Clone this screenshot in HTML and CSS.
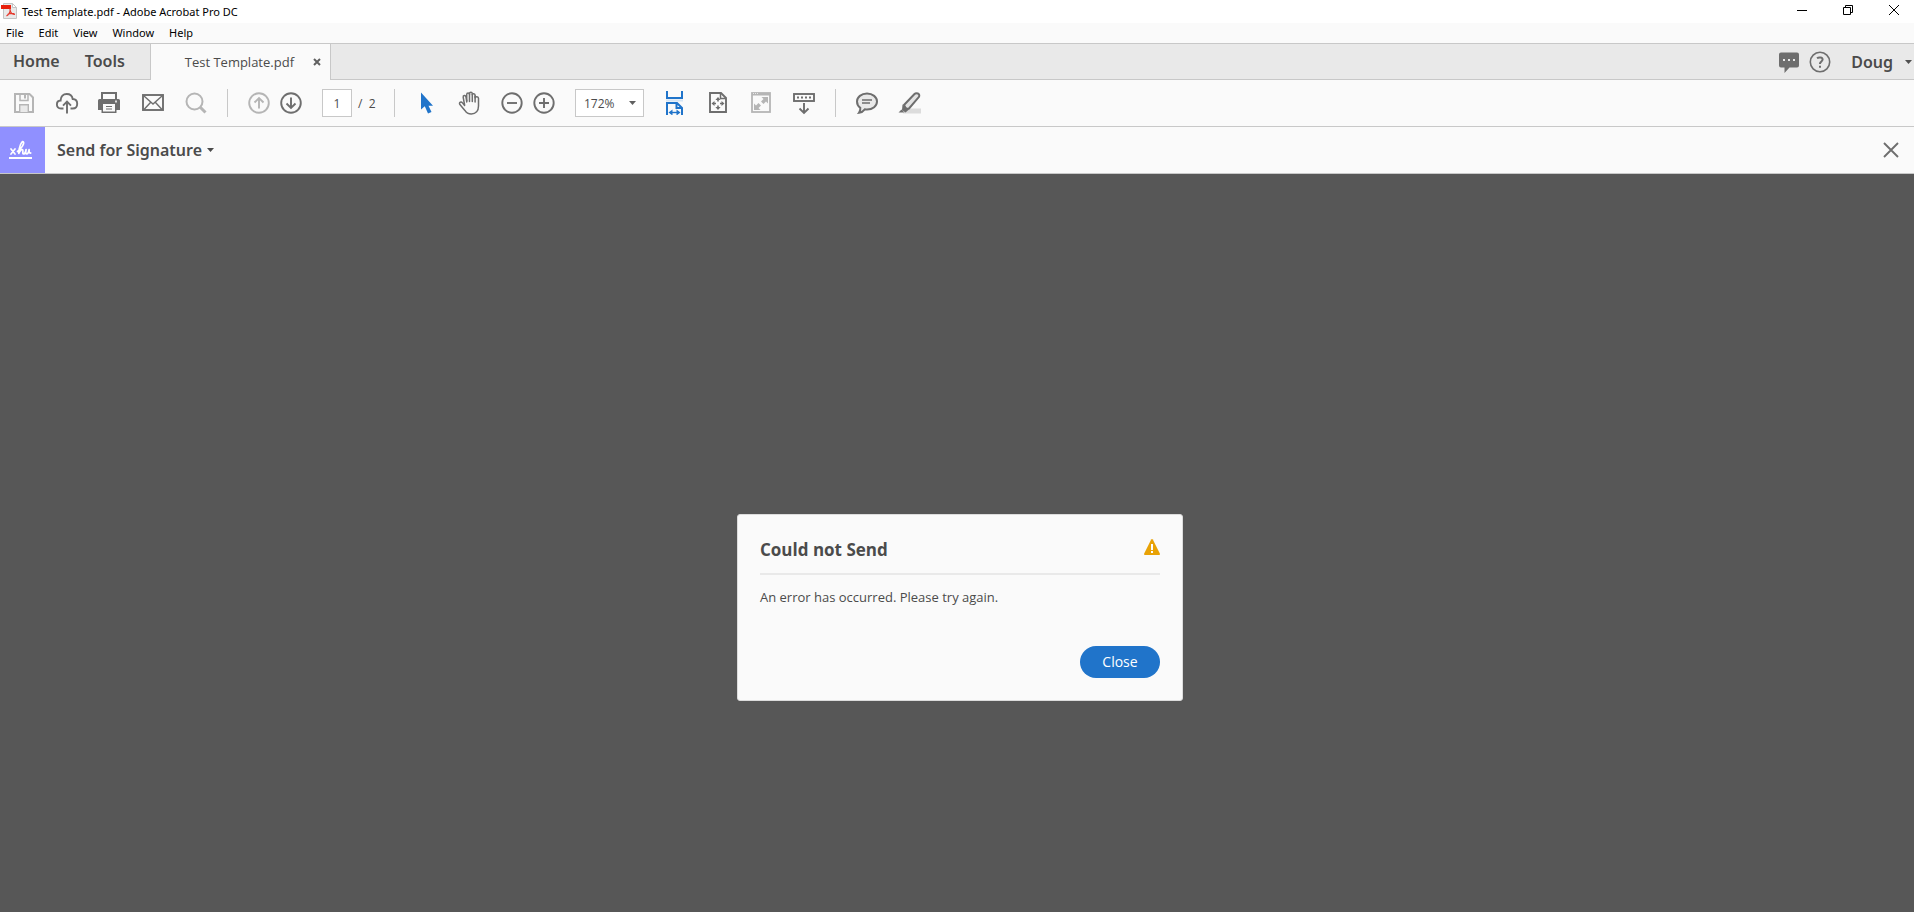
FILE: index.html
```html
<!DOCTYPE html>
<html lang="en">
<head>
<meta charset="utf-8">
<title>Test Template.pdf - Adobe Acrobat Pro DC</title>
<link rel="stylesheet" href="styles.css">
</head>
<body>
<div class="app">
  <header class="titlebar">
    <svg class="pdf-icon" width="16" height="16" viewBox="0 0 16 16" aria-hidden="true">
      <path d="M2.500 .5h9l4 4v11h-13z" fill="#e9e9e9" stroke="#c4c4c4"/>
      <path d="M11.500 .5v4h4z" fill="#fff" stroke="#c4c4c4"/>
      <path d="M0 2h10v4H0z" fill="#e8200c"/>
      <path d="M9 5.500c.5 3-1 6-3.500 7.500M9 6.500c.5 3 2 5 5 5M6.500 11.500c2-1.200 4.500-1.500 7-.8" fill="none" stroke="#e5392c" stroke-width="1.200"/>
    </svg>
    <h1 class="window-title">Test Template.pdf - Adobe Acrobat Pro DC</h1>
    <div class="window-controls">
      <button class="window-button" aria-label="Minimize"><svg width="10" height="10" viewBox="0 0 10 10"><path d="M0 5.500h10" stroke="#000"/></svg></button>
      <button class="window-button" aria-label="Restore"><svg width="10" height="10" viewBox="0 0 10 10"><path d="M.5 2.500h7v7h-7zM2.500 2.500v-2h7v7h-2" fill="none" stroke="#000"/></svg></button>
      <button class="window-button" aria-label="Close window"><svg width="10" height="10" viewBox="0 0 10 10"><path d="M0 0l10 10M10 0L0 10" stroke="#000"/></svg></button>
    </div>
  </header>

  <nav class="menubar" aria-label="Menu">
    <button class="menu-item">File</button>
    <button class="menu-item">Edit</button>
    <button class="menu-item">View</button>
    <button class="menu-item">Window</button>
    <button class="menu-item">Help</button>
  </nav>

  <div class="tabbar">
    <div class="main-tabs">
      <button class="main-tab">Home</button>
      <button class="main-tab">Tools</button>
    </div>
    <div class="document-tab">
      <button class="document-name">Test Template.pdf</button>
      <button class="icon-button" aria-label="Close tab"><svg width="8" height="8" viewBox="0 0 8 8"><path d="M1 1l6 6M7 1L1 7" stroke="#606060" stroke-width="2"/></svg></button>
    </div>
    <div class="account">
      <button class="icon-button" aria-label="Notifications"><svg width="22" height="22" viewBox="0 0 22 22"><path d="M3 1.500h16a2 2 0 0 1 2 2v11a2 2 0 0 1-2 2h-7.500L6.500 22v-5.500H3a2 2 0 0 1-2-2v-11a2 2 0 0 1 2-2z" fill="#6e6e6e"/><path d="M5 8h2v2H5zM10 8h2v2h-2zM15 8h2v2h-2z" fill="#e9e9e9"/></svg></button>
      <button class="icon-button" aria-label="Help"><svg width="22" height="22" viewBox="0 0 22 22" fill="none" stroke="#6e6e6e"><circle cx="11" cy="11" r="9.700" stroke-width="1.600"/><path d="M8 7.200c1.800-1.300 5.600-1.100 5.600 1.300 0 1.900-2.700 2-2.700 4.500" stroke-width="2"/><path d="M10 14.700h2v2h-2z" fill="#6e6e6e" stroke="none"/></svg></button>
      <button class="user-button">Doug<svg width="7" height="4" viewBox="0 0 7 4"><path d="M0 0h7L3.500 4z" fill="#505050"/></svg></button>
    </div>
  </div>

  <div class="toolbar" role="toolbar" aria-label="Document tools">
    <button class="icon-button" aria-label="Save"><svg width="24" height="24" viewBox="0 0 24 24" fill="none" stroke="#b5b5b5" stroke-width="2"><path d="M3 3h14.500L21 6.500V21H3z"/><path d="M8 3v6.500h8V3" stroke-width="1.500"/><path d="M13 4v3.500" stroke-width="2"/><path d="M7.700 21v-7.300h8.600V21" fill="#e9e9e9" stroke-width="1.400"/></svg></button>
    <button class="icon-button" aria-label="Upload to cloud"><svg width="24" height="24" viewBox="0 0 24 24" fill="none" stroke="#6e6e6e" stroke-width="1.900"><path d="M8.500 17.500H6C3.300 17.500 1.900 15.700 1.900 13.500c0-2.300 1.500-3.900 3.700-4C5.700 5.500 8.300 3 11.700 3c3.300 0 5.500 2 6 5 2.700.1 4.500 2 4.500 4.700 0 2.800-1.800 4.800-4.500 4.800h-2.200"/><path d="M12 22.500V11M8 14.700l4-4 4 4"/></svg></button>
    <button class="icon-button" aria-label="Print"><svg width="24" height="24" viewBox="1 0 24 24"><path d="M5 9V2h14v7" fill="#fafafa" stroke="#6e6e6e" stroke-width="2"/><path d="M2.500 8h19A1.500 1.500 0 0 1 23 9.500V19h-3.500v3h-15v-3H1V9.500A1.500 1.500 0 0 1 2.500 8z" fill="#6e6e6e"/><path d="M6 13h12v7.500H6z" fill="#fafafa"/><path d="M9 15.500h6M9 18h6" stroke="#6e6e6e"/><path d="M18 9.500h2v2h-2z" fill="#ddd"/></svg></button>
    <button class="icon-button" aria-label="Email"><svg width="24" height="24" viewBox="0 0 24 24" fill="none" stroke="#6e6e6e"><rect x="2" y="4" width="20" height="15" stroke-width="1.900"/><path d="M3 5l9 8 9-8M3 18.500l6.500-7M21 18.500l-6.500-7" stroke-width="1.400"/></svg></button>
    <button class="icon-button" aria-label="Search"><svg width="24" height="24" viewBox="0 0 24 24" fill="none" stroke="#b5b5b5"><circle cx="10.500" cy="10.500" r="8" stroke-width="2"/><path d="M16 16l5.500 5.500" stroke-width="3"/></svg></button>
    <span class="separator"></span>
    <div class="button-pair">
      <button class="icon-button" aria-label="Previous page"><svg width="24" height="24" viewBox="0 0 24 24" fill="none" stroke="#b5b5b5" stroke-width="1.900"><circle cx="12" cy="12" r="9.800"/><path d="M12 17.500V7.500M7.500 11.500L12 7l4.500 4.500"/></svg></button>
      <button class="icon-button" aria-label="Next page"><svg width="24" height="24" viewBox="0 0 24 24" fill="none" stroke="#6e6e6e" stroke-width="1.900"><circle cx="12" cy="12" r="9.800"/><path d="M12 6.500v10M7.500 12.500L12 17l4.500-4.500"/></svg></button>
    </div>
    <div class="page-position">
      <input class="page-input" type="text" value="1" aria-label="Page number">
      <span class="page-total">/&nbsp; 2</span>
    </div>
    <span class="separator"></span>
    <button class="icon-button" aria-label="Select"><svg width="24" height="24" viewBox="0 0 24 24"><path d="M7 1.500v17l3.800-3.200L14 22.500l3.500-1.600-3-6.200H19z" fill="#2074ca"/></svg></button>
    <button class="icon-button" aria-label="Hand"><svg width="24" height="24" viewBox="0 0 24 24" fill="#fafafa" stroke="#6e6e6e" stroke-width="1.500" stroke-linejoin="round" stroke-linecap="round"><path d="M7.600 14L6.200 6.300c-.3-2 2.200-2.500 2.700-.6l.8 4.300V3.500c.1-2 2.700-2 2.800 0V2.800c.1-2 2.700-1.900 2.800 0v.9c.3-1.500 2.700-1.300 2.800.5v2.500c.5-1.500 3.300-1.300 3.400.7V15c0 4.800-2.700 8-7.200 8-3.200 0-5-1.200-6.400-3.600L2.700 13.200c-.9-1.900 1.500-3 2.800-1.300l2.100 2.600"/><path d="M12.500 3.500v7M15.300 3.500v7M18.100 5v6M9.700 9v2"/></svg></button>
    <div class="button-pair">
      <button class="icon-button" aria-label="Zoom out"><svg width="24" height="24" viewBox="0 0 24 24" fill="none" stroke="#6e6e6e" stroke-width="1.900"><circle cx="12" cy="12" r="9.700"/><path d="M7 12h10"/></svg></button>
      <button class="icon-button" aria-label="Zoom in"><svg width="24" height="24" viewBox="0 0 24 24" fill="none" stroke="#6e6e6e" stroke-width="1.900"><circle cx="12" cy="12" r="9.700"/><path d="M7 12h10M12 7v10"/></svg></button>
    </div>
    <div class="zoom-field">
      <select class="zoom-select" aria-label="Zoom level"><option>172%</option></select>
      <svg class="zoom-arrow" width="7" height="4" viewBox="0 0 7 4" aria-hidden="true"><path d="M0 0h7L3.500 4z" fill="#606060"/></svg>
    </div>
    <button class="icon-button" aria-label="Fit width"><svg width="24" height="24" viewBox="0 0 24 24" fill="none" stroke="#2074ca" stroke-width="2"><path d="M4 0v7h15V0"/><path d="M3 9.500h17" stroke="#d5e5f5" stroke-width="2"/><path d="M4 24V12h10l5 5v7M13.500 12v5h5.500"/><path d="M7 21.500h9" stroke-width="1.400"/><path d="M9.500 18.500v6l-4-3zM13.500 18.500v6l4-3z" fill="#2074ca" stroke="none"/></svg></button>
    <button class="icon-button" aria-label="Fit page"><svg width="24" height="24" viewBox="0 0 24 24" fill="none" stroke="#6e6e6e" stroke-width="1.900"><path d="M4 2h11l5 5v14H4z"/><path d="M14.500 2v5.500H20" stroke-width="1.500"/><path d="M12 8v2.500M12 14.500V17M7.500 12.500H10M14 12.500h2.500" stroke-width="1.600"/><path d="M12 6l2.600 3H9.400zM12 19l2.600-3H9.400zM5.500 12.500l3-2.600v5.200zM18.500 12.500l-3-2.600v5.200z" fill="#6e6e6e" stroke="none"/></svg></button>
    <button class="icon-button" aria-label="Full screen"><svg width="24" height="24" viewBox="0 0 24 24"><rect x="3" y="2" width="18" height="19" fill="#fafafa" stroke="#b5b5b5" stroke-width="1.800"/><path d="M3 2h18v2.500H3z" fill="#b5b5b5"/><path d="M4 2.500h5" stroke="#e9e9e9" stroke-dasharray="1 1"/><path d="M12.500 6H19v6.500l-2-2-2.500 2.500-2.500-2.500L14.500 8zM5 12.500l2 2L9.500 12l2.500 2.500L9.500 17l2 2H5z" fill="#b5b5b5"/></svg></button>
    <button class="icon-button" aria-label="Read mode"><svg width="24" height="24" viewBox="0 0 24 24" fill="none" stroke="#6e6e6e" stroke-width="1.900"><rect x="2" y="3" width="20" height="7"/><path d="M5 6.500h14" stroke-width="2" stroke-dasharray="2 2"/><path d="M12 12v9.500M7.500 17.500L12 22l4.500-4.500"/></svg></button>
    <span class="separator"></span>
    <button class="icon-button" aria-label="Add comment"><svg width="24" height="24" viewBox="0 0 24 24" fill="#e9e9e9" stroke="#6e6e6e" stroke-width="2"><path d="M12 2.500c5.700 0 10 3.600 10 8 0 4.500-4.300 8-10 8-.8 0-1.500-.1-2.200-.2C8.500 20 6.500 21.500 4 21.800c1-1.400 1.500-3 1.300-5C3.200 15.300 2 13 2 10.500c0-4.400 4.300-8 10-8z"/><path d="M7 9h10M7 12h8" stroke-width="1.300"/></svg></button>
    <button class="icon-button" aria-label="Highlight"><svg width="24" height="24" viewBox="1 0 24 24"><path d="M9 17.500h15v5H6z" fill="#dcdcdc"/><path d="M7 14L17.500 3c1.500-1.500 6-.8 4.500 2.800L12 17.500 9 18z" fill="#e3e3e3" stroke="#6e6e6e" stroke-width="2"/><path d="M5.500 13.500l6.500 5-3.500 3-3.500-2.500zM4.500 18.500l3 3H1.500z" fill="#6e6e6e"/></svg></button>
  </div>

  <div class="tool-header">
    <div class="signature-badge"><svg width="24" height="20" viewBox="0 0 24 20" fill="none" stroke="#fff" stroke-linejoin="round" stroke-linecap="round" aria-hidden="true"><path d="M2 9l4 5M6 9l-4 5" stroke-width="1.700"/><path d="M8.500 11.500C12 9 15.800 3.500 14.300 1.800 12.800.3 9.500 8 9.800 13.500c1-2.800 2.800-4.500 3.800-3.800.9.700-.5 4.300.9 4.300 1.600 0 2.200-2.500 2.600-4.300-.5 2-.6 4.300.7 4.300 1.400 0 2-2.500 2.300-4.300-.1 2.600.3 3.800 1.600 3.300" stroke-width="1.700"/><path d="M0 18h23" stroke-width="2" stroke-linecap="butt"/></svg></div>
    <button class="tool-title">Send for Signature<svg width="7" height="4" viewBox="0 0 7 4"><path d="M0 0h7L3.500 4z" fill="#4b4b4b"/></svg></button>
    <button class="icon-button tool-close" aria-label="Close tool"><svg width="16" height="16" viewBox="0 0 16 16"><path d="M1 1l14 14M15 1L1 15" stroke="#6e6e6e" stroke-width="1.900"/></svg></button>
  </div>

  <main class="workspace">
    <section class="dialog" role="alertdialog" aria-labelledby="dialog-title" aria-describedby="dialog-message">
      <div class="dialog-header">
        <h2 class="dialog-title" id="dialog-title">Could not Send</h2>
        <svg width="16" height="16" viewBox="0 0 16 16" aria-hidden="true"><path d="M8 0q.5 0 .8.600l7 14q.5 1.400-.6 1.400H.8Q-.3 16 .2 14.600l7-14Q7.500 0 8 0z" fill="#e8a206"/><path d="M7 5h2v6H7zM7 12h2v2H7z" fill="#fff"/></svg>
      </div>
      <p class="dialog-message" id="dialog-message">An error has occurred. Please try again.</p>
      <div class="dialog-actions"><button class="primary-button">Close</button></div>
    </section>
  </main>
</div>
</body>
</html>
```
FILE: styles.css
```css
* {
  box-sizing: border-box;
}

body {
  margin: 0;
  font-family: "Open Sans", "Noto Sans", sans-serif;
  font-size: 12px;
  color: #4b4b4b;
}

button,
input,
select {
  margin: 0;
  padding: 0;
  border: 0;
  background: none;
  font: inherit;
  color: inherit;
}

svg {
  display: block;
  flex: none;
}

.app {
  display: flex;
  flex-direction: column;
  min-height: 100vh;
  background: #fafafa;
}

.titlebar {
  display: flex;
  align-items: center;
  height: 23px;
  padding: 0 0 1px 1px;
  background: #fff;
  font-family: "Noto Sans", sans-serif;
  color: #000;
}

.window-title {
  margin: 0 0 0 5px;
  font-size: 11px;
  font-weight: 400;
}

.window-controls {
  display: flex;
  gap: 6px;
  align-self: flex-start;
  margin-left: auto;
}

.window-button {
  display: grid;
  place-items: center;
  width: 40px;
  height: 20px;
}

.menubar {
  display: flex;
  gap: 15px;
  height: 20px;
  padding: 0 6px 2px;
  font-family: "Noto Sans", sans-serif;
  font-size: 11px;
  color: #000;
}

.tabbar {
  display: flex;
  height: 37px;
  border-top: 1px solid #c8c8c8;
  background: #e9e9e9;
}

.main-tabs {
  display: flex;
  gap: 25px;
  width: 151px;
  padding: 0 0 2px 13px;
  border-right: 1px solid #c8c8c8;
  border-bottom: 1px solid #c8c8c8;
}

.main-tab,
.user-button,
.tool-title {
  font-family: "Noto Sans", sans-serif;
  font-size: 16px;
  font-weight: 600;
}

.document-tab {
  display: flex;
  align-items: center;
  justify-content: flex-end;
  gap: 19px;
  width: 180px;
  padding-right: 9px;
  border-right: 1px solid #c8c8c8;
  background: #fafafa;
}

.document-name {
  font-size: 13px;
}

.account {
  display: flex;
  flex: 1;
  align-items: center;
  justify-content: flex-end;
  gap: 9px;
  padding-right: 2px;
  border-bottom: 1px solid #c8c8c8;
}

.user-button {
  display: flex;
  align-items: center;
  gap: 12px;
  margin-left: 11px;
}

.toolbar {
  display: flex;
  align-items: center;
  gap: 19px;
  height: 47px;
  padding: 0 12px;
  border-bottom: 1px solid #c8c8c8;
}

.separator {
  width: 1px;
  height: 28px;
  background: #c8c8c8;
}

.button-pair {
  display: flex;
  gap: 8px;
}

.page-position {
  display: flex;
  align-items: center;
  gap: 6px;
  width: 53px;
  white-space: nowrap;
}

.page-input {
  width: 30px;
  height: 28px;
  border: 1px solid #c8c8c8;
  background: #fff;
  text-align: center;
}

.zoom-field {
  position: relative;
}

.zoom-select {
  display: block;
  width: 69px;
  height: 28px;
  padding-left: 8px;
  border: 1px solid #c8c8c8;
  appearance: none;
  background: #fff;
}

.zoom-arrow {
  position: absolute;
  top: 12px;
  right: 8px;
  pointer-events: none;
}

.tool-header {
  display: flex;
  align-items: center;
  height: 47px;
  border-bottom: 1px solid #c8c8c8;
}

.signature-badge {
  display: flex;
  align-items: center;
  align-self: stretch;
  width: 45px;
  padding-left: 9px;
  background: #9090ff;
}

.tool-title {
  display: flex;
  align-items: center;
  gap: 5px;
  margin-left: 12px;
}

.tool-close {
  margin-left: auto;
  margin-right: 15px;
}

.workspace {
  flex: 1;
  padding: 340px 0 24px 6px;
  background: #575757;
}

.dialog {
  width: 446px;
  margin: 0 auto;
  padding: 22px;
  border: 1px solid #dcdcdc;
  border-radius: 3px;
  background: #fafafa;
}

.dialog-header {
  display: flex;
  align-items: flex-start;
  justify-content: space-between;
  padding: 2px 0 12px;
  border-bottom: 2px solid #e9e9e9;
}

.dialog-title {
  margin: 0;
  font-size: 17px;
  font-weight: 700;
  line-height: 22px;
}

.dialog-message {
  margin: 11px 0 38px;
  font-size: 13px;
  line-height: 22px;
}

.dialog-actions {
  display: flex;
  justify-content: flex-end;
}

.primary-button {
  width: 80px;
  height: 32px;
  padding-bottom: 2px;
  border-radius: 16px;
  background: #2074ca;
  font-size: 14px;
  color: #fff;
}
```
